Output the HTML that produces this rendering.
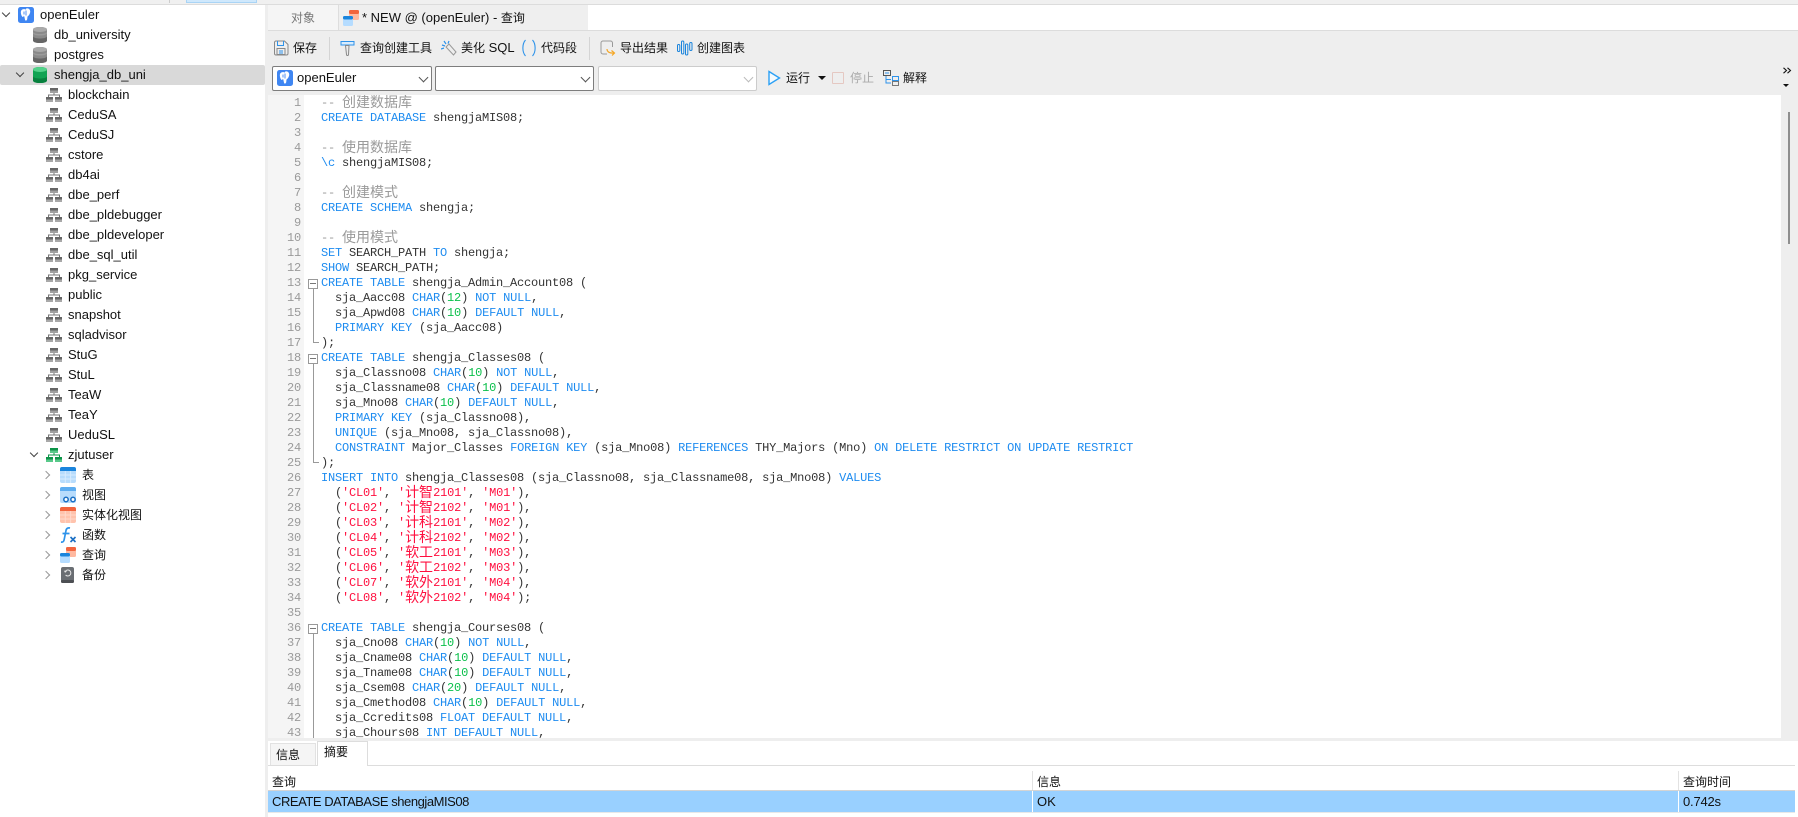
<!DOCTYPE html>
<html lang="zh"><head><meta charset="utf-8"><title>openEuler - 查询</title>
<style>
html,body{margin:0;padding:0;background:#fff}
body{width:1798px;height:817px;position:relative;overflow:hidden;font-family:"Liberation Sans","Noto Sans CJK SC",sans-serif;font-size:13px;color:#111}
.a{position:absolute}
.t{position:absolute;white-space:nowrap;line-height:20px;height:20px}
.c{font-size:12px}
.row svg,.a svg{display:block}
#side{left:0;top:5px;width:265px;height:812px;background:#fff}
#code{left:268px;top:95px;width:1513px;height:643px;overflow:hidden;background:#fff}
#gut{left:0;top:0;width:36px;height:643px;background:#f5f5f5}
.l{position:absolute;left:53px;margin-top:1px;height:15px;line-height:15px;white-space:pre;font-family:"Liberation Mono","Noto Sans CJK SC",monospace;font-size:12px;letter-spacing:-.2px;color:#333}
.n{position:absolute;left:0;margin-top:1px;width:33px;text-align:right;height:15px;line-height:15px;font-family:"Liberation Mono",monospace;font-size:12px;letter-spacing:-.2px;color:#9a9a9a}
b{font-weight:normal;color:#1e8cf0}
em{font-style:normal;color:#0cc04c}
s{text-decoration:none;color:#ff0f3f}
i{font-style:normal;color:#9a9a9a}
.z{font-size:14px;letter-spacing:0;line-height:0;font-family:"Noto Sans CJK SC",sans-serif;position:relative;top:1px}
.fb{position:absolute;left:40px;margin-top:1px;width:8px;height:8px;border:1px solid #999;background:#fff}
.fb:after{content:"";position:absolute;left:1px;top:3px;width:6px;height:1px;background:#777}
.fl{position:absolute;left:45px;margin-top:1px;width:1px;background:#999}
.ft{position:absolute;left:45px;margin-top:1px;width:6px;height:1px;background:#999}
.sel{position:absolute;top:66px;height:23px;background:#fff;border:1px solid #7d7d7d;border-radius:2px}
.chev{position:absolute;width:6px;height:6px;border-right:1px solid #555;border-bottom:1px solid #555;transform:rotate(45deg)}
.tc{position:absolute;width:5px;height:5px;border-right:1.500px solid #444;border-bottom:1.500px solid #444;transform:rotate(45deg)}
.tr{position:absolute;width:5px;height:5px;border-right:1.500px solid #999;border-bottom:1.500px solid #999;transform:rotate(-45deg)}
</style></head><body>
<svg width="0" height="0" style="position:absolute"><defs>
<symbol id="pg" viewBox="0 0 16 16"><rect width="16" height="16" rx="2.5" fill="#3f86f2"/><path d="M8 2.6C6.6 1.9 3.4 1.800 2.900 4.500c-.3 2 .6 4.300 1.500 5.300.6.600 1.200-.2 1.400-1 .8.500.9 3.400 1.400 4.400.5.700 1.700.4 2-.9.200-1 .1-2.500.5-3.100 1.200-.4 2.700-3.200 2.500-5-.2-2.600-2.800-3.300-4.200-2.600z" fill="#fff"/><path d="M8 3.500v5M6 4.500v3" stroke="#3f86f2" stroke-width=".9" fill="none"/></symbol>
<symbol id="dbg" viewBox="0 0 14 16"><path d="M0 2.500C0 1 3 0 7 0s7 1 7 2.500v11C14 15 11 16 7 16s-7-1-7-2.500z" fill="#8a8a8a"/><ellipse cx="7" cy="2.500" rx="7" ry="2.500" fill="#aaa"/><path d="M0 9.500C1 11 4 11.500 7 11.500s6-.5 7-2V13.500C14 15 11 16 7 16s-7-1-7-2.500z" fill="#666"/><path d="M0 5C1 6.500 4 7 7 7s6-.5 7-2v1.500c-1 1.500-4 2-7 2s-6-.5-7-2z" fill="#9b9b9b"/></symbol>
<symbol id="dbv" viewBox="0 0 14 16"><path d="M0 2.500C0 1 3 0 7 0s7 1 7 2.500v11C14 15 11 16 7 16s-7-1-7-2.500z" fill="#10a352"/><ellipse cx="7" cy="2.500" rx="7" ry="2.500" fill="#53d28a"/><path d="M0 9.500C1 11 4 11.500 7 11.500s6-.5 7-2V13.500C14 15 11 16 7 16s-7-1-7-2.500z" fill="#07813e"/></symbol>
<symbol id="sch" viewBox="0 0 16 14"><rect x="4" y="0" width="8" height="2.500" fill="#666"/><rect x="4" y="2.500" width="8" height="2.500" fill="#a0a0a0"/><path d="M8 5v2M2.500 9V7h11v2" stroke="#777" fill="none"/><rect x="0" y="9" width="7" height="2.500" fill="#666"/><rect x="0" y="11.500" width="7" height="2.500" fill="#a8a8a8"/><rect x="9" y="9" width="7" height="2.500" fill="#666"/><rect x="9" y="11.500" width="7" height="2.500" fill="#a8a8a8"/></symbol>
<symbol id="schg" viewBox="0 0 16 14"><rect x="4" y="0" width="8" height="2.500" fill="#0d9448"/><rect x="4" y="2.500" width="8" height="2.500" fill="#59c98a"/><path d="M8 5v2M2.500 9V7h11v2" stroke="#0d9448" fill="none"/><rect x="0" y="9" width="7" height="2.500" fill="#0d9448"/><rect x="0" y="11.500" width="7" height="2.500" fill="#59c98a"/><rect x="9" y="9" width="7" height="2.500" fill="#0d9448"/><rect x="9" y="11.500" width="7" height="2.500" fill="#59c98a"/></symbol>
<symbol id="qry" viewBox="0 0 16 16"><rect x="6" y="0" width="10" height="10" rx="1.500" fill="#ffb9a0"/><rect x="6" y="0" width="10" height="4" rx="1.500" fill="#f2643d"/><rect x="0" y="6" width="10" height="10" rx="1.500" fill="#b5dcff"/><rect x="0" y="6" width="10" height="3.500" rx="1.500" fill="#1a84dc"/></symbol>
</defs></svg>

<!-- top strip -->
<div class="a" style="left:0;top:0;width:1798px;height:4px;background:#f0f0f0"></div>
<div class="a" style="left:0;top:4px;width:1798px;height:1px;background:#dcdcdc"></div>
<div class="a" style="left:186px;top:0;width:69px;height:2px;background:#cfe8fc;border:1px solid #a9d4f5;border-top:0"></div>
<div class="a" style="left:169px;top:0;width:1px;height:3px;background:#ccc"></div>

<!-- sidebar -->
<div class="a" id="side"></div>
<div class="a" style="left:265px;top:5px;width:3px;height:812px;background:#eee"></div>
<div class="a" style="left:0;top:65px;width:265px;height:20px;background:#d9d9d9;border-radius:2px"></div>

<div class="tc" style="left:3px;top:10px"></div>
<svg class="a" style="left:18px;top:7px" width="16" height="16"><use href="#pg"/></svg>
<div class="t" style="left:40px;top:5px">openEuler</div>
<svg class="a" style="left:33px;top:27px" width="14" height="16"><use href="#dbg"/></svg>
<div class="t" style="left:54px;top:25px">db_university</div>
<svg class="a" style="left:33px;top:47px" width="14" height="16"><use href="#dbg"/></svg>
<div class="t" style="left:54px;top:45px">postgres</div>
<div class="tc" style="left:17px;top:70px"></div>
<svg class="a" style="left:33px;top:67px" width="14" height="16"><use href="#dbv"/></svg>
<div class="t" style="left:54px;top:65px">shengja_db_uni</div>

<svg class="a" style="left:46px;top:88px" width="16" height="14"><use href="#sch"/></svg><div class="t" style="left:68px;top:85px">blockchain</div>
<svg class="a" style="left:46px;top:108px" width="16" height="14"><use href="#sch"/></svg><div class="t" style="left:68px;top:105px">CeduSA</div>
<svg class="a" style="left:46px;top:128px" width="16" height="14"><use href="#sch"/></svg><div class="t" style="left:68px;top:125px">CeduSJ</div>
<svg class="a" style="left:46px;top:148px" width="16" height="14"><use href="#sch"/></svg><div class="t" style="left:68px;top:145px">cstore</div>
<svg class="a" style="left:46px;top:168px" width="16" height="14"><use href="#sch"/></svg><div class="t" style="left:68px;top:165px">db4ai</div>
<svg class="a" style="left:46px;top:188px" width="16" height="14"><use href="#sch"/></svg><div class="t" style="left:68px;top:185px">dbe_perf</div>
<svg class="a" style="left:46px;top:208px" width="16" height="14"><use href="#sch"/></svg><div class="t" style="left:68px;top:205px">dbe_pldebugger</div>
<svg class="a" style="left:46px;top:228px" width="16" height="14"><use href="#sch"/></svg><div class="t" style="left:68px;top:225px">dbe_pldeveloper</div>
<svg class="a" style="left:46px;top:248px" width="16" height="14"><use href="#sch"/></svg><div class="t" style="left:68px;top:245px">dbe_sql_util</div>
<svg class="a" style="left:46px;top:268px" width="16" height="14"><use href="#sch"/></svg><div class="t" style="left:68px;top:265px">pkg_service</div>
<svg class="a" style="left:46px;top:288px" width="16" height="14"><use href="#sch"/></svg><div class="t" style="left:68px;top:285px">public</div>
<svg class="a" style="left:46px;top:308px" width="16" height="14"><use href="#sch"/></svg><div class="t" style="left:68px;top:305px">snapshot</div>
<svg class="a" style="left:46px;top:328px" width="16" height="14"><use href="#sch"/></svg><div class="t" style="left:68px;top:325px">sqladvisor</div>
<svg class="a" style="left:46px;top:348px" width="16" height="14"><use href="#sch"/></svg><div class="t" style="left:68px;top:345px">StuG</div>
<svg class="a" style="left:46px;top:368px" width="16" height="14"><use href="#sch"/></svg><div class="t" style="left:68px;top:365px">StuL</div>
<svg class="a" style="left:46px;top:388px" width="16" height="14"><use href="#sch"/></svg><div class="t" style="left:68px;top:385px">TeaW</div>
<svg class="a" style="left:46px;top:408px" width="16" height="14"><use href="#sch"/></svg><div class="t" style="left:68px;top:405px">TeaY</div>
<svg class="a" style="left:46px;top:428px" width="16" height="14"><use href="#sch"/></svg><div class="t" style="left:68px;top:425px">UeduSL</div>
<div class="tc" style="left:31px;top:450px"></div>
<svg class="a" style="left:46px;top:448px" width="16" height="14"><use href="#schg"/></svg><div class="t" style="left:68px;top:445px">zjutuser</div>

<div class="tr" style="left:43px;top:472px"></div>
<svg class="a" style="left:60px;top:467px" width="16" height="16"><rect width="16" height="16" rx="2" fill="#b8dcfc"/><path d="M5.300 4v12M10.600 4v12M0 8h16M0 12h16" stroke="#d8ecfe"/><path d="M0 4V2a2 2 0 0 1 2-2h12a2 2 0 0 1 2 2v2z" fill="#1a84dc"/></svg>
<div class="t c" style="left:82px;top:465px">表</div>
<div class="tr" style="left:43px;top:492px"></div>
<svg class="a" style="left:60px;top:487px" width="16" height="16"><rect width="16" height="16" rx="2" fill="#b8dcfc"/><path d="M0 4V2a2 2 0 0 1 2-2h12a2 2 0 0 1 2 2v2z" fill="#5eadf0"/><circle cx="6" cy="12.500" r="2.200" fill="#fff" stroke="#1a6fc4" stroke-width="1.500"/><circle cx="13" cy="12.500" r="2.200" fill="#fff" stroke="#1a6fc4" stroke-width="1.500"/></svg>
<div class="t c" style="left:82px;top:485px">视图</div>
<div class="tr" style="left:43px;top:512px"></div>
<svg class="a" style="left:60px;top:507px" width="16" height="16"><rect width="16" height="16" rx="2" fill="#ffc3ad"/><path d="M5.300 4v12M10.600 4v12M0 8h16M0 12h16" stroke="#ffd9cb"/><path d="M0 4V2a2 2 0 0 1 2-2h12a2 2 0 0 1 2 2v2z" fill="#f2643d"/></svg>
<div class="t c" style="left:82px;top:505px">实体化视图</div>
<div class="tr" style="left:43px;top:532px"></div>
<svg class="a" style="left:60px;top:527px" width="17" height="16"><path d="M1 15c2.500.5 3-1 3.500-4L6 3.500C6.400 1.500 7.500.5 10 1M2.500 6.500h7" stroke="#2e93ea" stroke-width="1.700" fill="none"/><path d="M10.500 10l5 5m0-5l-5 5" stroke="#1a6fc4" stroke-width="1.600"/></svg>
<div class="t c" style="left:82px;top:525px">函数</div>
<div class="tr" style="left:43px;top:552px"></div>
<svg class="a" style="left:60px;top:547px" width="16" height="16"><use href="#qry"/></svg>
<div class="t c" style="left:82px;top:545px">查询</div>
<div class="tr" style="left:43px;top:572px"></div>
<svg class="a" style="left:61px;top:567px" width="13" height="16"><rect width="13" height="16" rx="2" fill="#6a6e73"/><rect y="13" width="13" height="3" rx="1.500" fill="#4c4f53"/><path d="M4 5a3 3 0 1 1 .6 3" stroke="#e8e8e8" fill="none"/><path d="M2.800 3.500L4 5.800 6 4.500z" fill="#e8e8e8"/></svg>
<div class="t c" style="left:82px;top:565px">备份</div>

<!-- tabs -->
<div class="a" style="left:268px;top:5px;width:1530px;height:25px;background:#fff"></div>
<div class="a" style="left:268px;top:5px;width:70px;height:25px;background:#f5f5f5;border-right:1px solid #ddd"></div>
<div class="t c" style="left:291px;top:8px;color:#777">对象</div>
<div class="a" style="left:339px;top:5px;width:249px;height:25px;background:#efefef"></div>
<svg class="a" style="left:343px;top:10px" width="16" height="16"><use href="#qry"/></svg>
<div class="t" style="left:362px;top:8px">* NEW @ (openEuler) - <span class="c">查询</span></div>
<div class="a" style="left:268px;top:30px;width:1530px;height:1px;background:#dcdcdc"></div>

<!-- toolbar -->
<div class="a" style="left:268px;top:31px;width:1530px;height:64px;background:#eee"></div>
<svg class="a" style="left:273px;top:40px" width="16" height="16" fill="none"><path d="M1.500 2.500a1.500 1.500 0 0 1 1.500-1.500h8.500l3.500 3.500v9a1.500 1.500 0 0 1-1.500 1.500H3a1.500 1.500 0 0 1-1.500-1.500z" stroke="#888"/><path d="M4.500 1v4.500h6V1" stroke="#2e93ea"/><rect x="4" y="8.500" width="8" height="6" stroke="#888"/><path d="M6 11h4M6 13h4" stroke="#2e93ea"/></svg>
<div class="t c" style="left:293px;top:38px">保存</div>
<div class="a" style="left:329px;top:37px;width:1px;height:23px;background:#d4d4d4"></div>
<svg class="a" style="left:340px;top:40px" width="15" height="16" fill="none"><path d="M1 1.500h13v3.500H1z" stroke="#2e93ea" fill="#d8ecfe"/><path d="M5.500 5.500h3.500L8.500 14.500a1 1 0 0 1-2 0z" stroke="#888" fill="#eee"/></svg>
<div class="t c" style="left:360px;top:38px">查询创建工具</div>
<svg class="a" style="left:441px;top:40px" width="16" height="16" fill="none"><path d="M5 7l3-3 7 8-2.500 3z" stroke="#999" fill="#eee"/><path d="M1 5l3 1M3 1l2 3M8 1L7 3.500M0 9l3-1" stroke="#2e93ea" stroke-width="1.200"/></svg>
<div class="t" style="left:461px;top:38px"><span class="c">美化</span> SQL</div>
<svg class="a" style="left:521px;top:39px" width="16" height="18" fill="none" stroke="#2e93ea" stroke-width="1.100"><path d="M4.500 1C1 5 1 13 4.500 17M11.500 1c3.500 4 3.500 12 0 16"/></svg>
<div class="t c" style="left:541px;top:38px">代码段</div>
<div class="a" style="left:589px;top:37px;width:1px;height:23px;background:#d4d4d4"></div>
<svg class="a" style="left:600px;top:40px" width="16" height="16" fill="none"><path d="M12.500 7V3a2 2 0 0 0-2-2H3a2 2 0 0 0-2 2v9a2 2 0 0 0 2 2h4" stroke="#999"/><path d="M7 9c0 3 3 4.500 7 4m-2.500-2.500L14.500 13l-2.500 2.500" stroke="#f5a623" stroke-width="1.200"/></svg>
<div class="t c" style="left:620px;top:38px">导出结果</div>
<svg class="a" style="left:677px;top:40px" width="16" height="16" fill="none" stroke="#1a84dc" stroke-width="1"><rect x=".5" y="4.500" width="2.300" height="7" rx="1.100"/><rect x="4.500" y="1" width="2.300" height="13" rx="1.100"/><rect x="8.500" y="4" width="2.300" height="11" rx="1.100"/><rect x="12.700" y="2.500" width="2.300" height="8" rx="1.100"/></svg>
<div class="t c" style="left:697px;top:38px">创建图表</div>

<!-- selects -->
<div class="sel" style="left:272px;width:158px"></div>
<svg class="a" style="left:277px;top:70px" width="16" height="16"><use href="#pg"/></svg>
<div class="t" style="left:297px;top:68px">openEuler</div>
<div class="chev" style="left:420px;top:74px"></div>
<div class="sel" style="left:435px;width:157px"></div>
<div class="chev" style="left:582px;top:74px"></div>
<div class="sel" style="left:598px;width:157px;border-color:#ccc"></div>
<div class="chev" style="left:745px;top:74px;border-color:#bbb"></div>

<svg class="a" style="left:767px;top:70px" width="14" height="16" fill="none"><path d="M2 1.500L12.500 8 2 14.500z" stroke="#2ba0f5" stroke-width="1.400" fill="#f4fafe"/></svg>
<div class="t c" style="left:786px;top:68px">运行</div>
<div class="a" style="left:818px;top:76px;width:0;height:0;border-left:4px solid transparent;border-right:4px solid transparent;border-top:4px solid #111"></div>
<div class="a" style="left:832px;top:72px;width:10px;height:10px;border:1px solid #e5c8c2;border-radius:1px"></div>
<div class="t c" style="left:850px;top:68px;color:#aaa">停止</div>
<svg class="a" style="left:883px;top:70px" width="16" height="16" fill="none"><rect x=".5" y=".5" width="7" height="5" stroke="#555"/><path d="M2 3h4" stroke="#2e93ea"/><path d="M3 6v3.500h5M3 9.500V13h5" stroke="#2e93ea"/><rect x="9.500" y="6.500" width="6" height="4" stroke="#2e93ea"/><rect x="9.500" y="11.500" width="6" height="4" stroke="#777"/></svg>
<div class="t c" style="left:903px;top:68px">解释</div>

<svg class="a" style="left:1783px;top:67px" width="9" height="7" fill="none" stroke="#111" stroke-width="1.100"><path d="M.5 .8l3 2.700-3 2.700M4.500 .8l3 2.700-3 2.700"/></svg>
<div class="a" style="left:1783px;top:84px;width:0;height:0;border-left:3px solid transparent;border-right:3px solid transparent;border-top:3px solid #111"></div>

<!-- editor -->
<div class="a" id="code">
<div class="a" id="gut"></div>
<div class="n" style="top:0">1</div><div class="l" style="top:0"><i>-- <span class="z">创建数据库</span></i></div>
<div class="n" style="top:15px">2</div><div class="l" style="top:15px"><b>CREATE DATABASE</b> shengjaMIS08;</div>
<div class="n" style="top:30px">3</div>
<div class="n" style="top:45px">4</div><div class="l" style="top:45px"><i>-- <span class="z">使用数据库</span></i></div>
<div class="n" style="top:60px">5</div><div class="l" style="top:60px"><b>\c</b> shengjaMIS08;</div>
<div class="n" style="top:75px">6</div>
<div class="n" style="top:90px">7</div><div class="l" style="top:90px"><i>-- <span class="z">创建模式</span></i></div>
<div class="n" style="top:105px">8</div><div class="l" style="top:105px"><b>CREATE SCHEMA</b> shengja;</div>
<div class="n" style="top:120px">9</div>
<div class="n" style="top:135px">10</div><div class="l" style="top:135px"><i>-- <span class="z">使用模式</span></i></div>
<div class="n" style="top:150px">11</div><div class="l" style="top:150px"><b>SET</b> SEARCH_PATH <b>TO</b> shengja;</div>
<div class="n" style="top:165px">12</div><div class="l" style="top:165px"><b>SHOW</b> SEARCH_PATH;</div>
<div class="n" style="top:180px">13</div><div class="l" style="top:180px"><b>CREATE TABLE</b> shengja_Admin_Account08 (</div>
<div class="n" style="top:195px">14</div><div class="l" style="top:195px">  sja_Aacc08 <b>CHAR</b>(<em>12</em>) <b>NOT NULL</b>,</div>
<div class="n" style="top:210px">15</div><div class="l" style="top:210px">  sja_Apwd08 <b>CHAR</b>(<em>10</em>) <b>DEFAULT NULL</b>,</div>
<div class="n" style="top:225px">16</div><div class="l" style="top:225px">  <b>PRIMARY KEY</b> (sja_Aacc08)</div>
<div class="n" style="top:240px">17</div><div class="l" style="top:240px">);</div>
<div class="n" style="top:255px">18</div><div class="l" style="top:255px"><b>CREATE TABLE</b> shengja_Classes08 (</div>
<div class="n" style="top:270px">19</div><div class="l" style="top:270px">  sja_Classno08 <b>CHAR</b>(<em>10</em>) <b>NOT NULL</b>,</div>
<div class="n" style="top:285px">20</div><div class="l" style="top:285px">  sja_Classname08 <b>CHAR</b>(<em>10</em>) <b>DEFAULT NULL</b>,</div>
<div class="n" style="top:300px">21</div><div class="l" style="top:300px">  sja_Mno08 <b>CHAR</b>(<em>10</em>) <b>DEFAULT NULL</b>,</div>
<div class="n" style="top:315px">22</div><div class="l" style="top:315px">  <b>PRIMARY KEY</b> (sja_Classno08),</div>
<div class="n" style="top:330px">23</div><div class="l" style="top:330px">  <b>UNIQUE</b> (sja_Mno08, sja_Classno08),</div>
<div class="n" style="top:345px">24</div><div class="l" style="top:345px">  <b>CONSTRAINT</b> Major_Classes <b>FOREIGN KEY</b> (sja_Mno08) <b>REFERENCES</b> THY_Majors (Mno) <b>ON DELETE RESTRICT ON UPDATE RESTRICT</b></div>
<div class="n" style="top:360px">25</div><div class="l" style="top:360px">);</div>
<div class="n" style="top:375px">26</div><div class="l" style="top:375px"><b>INSERT INTO</b> shengja_Classes08 (sja_Classno08, sja_Classname08, sja_Mno08) <b>VALUES</b></div>
<div class="n" style="top:390px">27</div><div class="l" style="top:390px">  (<s>'CL01'</s>, <s>'<span class="z">计智</span>2101'</s>, <s>'M01'</s>),</div>
<div class="n" style="top:405px">28</div><div class="l" style="top:405px">  (<s>'CL02'</s>, <s>'<span class="z">计智</span>2102'</s>, <s>'M01'</s>),</div>
<div class="n" style="top:420px">29</div><div class="l" style="top:420px">  (<s>'CL03'</s>, <s>'<span class="z">计科</span>2101'</s>, <s>'M02'</s>),</div>
<div class="n" style="top:435px">30</div><div class="l" style="top:435px">  (<s>'CL04'</s>, <s>'<span class="z">计科</span>2102'</s>, <s>'M02'</s>),</div>
<div class="n" style="top:450px">31</div><div class="l" style="top:450px">  (<s>'CL05'</s>, <s>'<span class="z">软工</span>2101'</s>, <s>'M03'</s>),</div>
<div class="n" style="top:465px">32</div><div class="l" style="top:465px">  (<s>'CL06'</s>, <s>'<span class="z">软工</span>2102'</s>, <s>'M03'</s>),</div>
<div class="n" style="top:480px">33</div><div class="l" style="top:480px">  (<s>'CL07'</s>, <s>'<span class="z">软外</span>2101'</s>, <s>'M04'</s>),</div>
<div class="n" style="top:495px">34</div><div class="l" style="top:495px">  (<s>'CL08'</s>, <s>'<span class="z">软外</span>2102'</s>, <s>'M04'</s>);</div>
<div class="n" style="top:510px">35</div>
<div class="n" style="top:525px">36</div><div class="l" style="top:525px"><b>CREATE TABLE</b> shengja_Courses08 (</div>
<div class="n" style="top:540px">37</div><div class="l" style="top:540px">  sja_Cno08 <b>CHAR</b>(<em>10</em>) <b>NOT NULL</b>,</div>
<div class="n" style="top:555px">38</div><div class="l" style="top:555px">  sja_Cname08 <b>CHAR</b>(<em>10</em>) <b>DEFAULT NULL</b>,</div>
<div class="n" style="top:570px">39</div><div class="l" style="top:570px">  sja_Tname08 <b>CHAR</b>(<em>10</em>) <b>DEFAULT NULL</b>,</div>
<div class="n" style="top:585px">40</div><div class="l" style="top:585px">  sja_Csem08 <b>CHAR</b>(<em>20</em>) <b>DEFAULT NULL</b>,</div>
<div class="n" style="top:600px">41</div><div class="l" style="top:600px">  sja_Cmethod08 <b>CHAR</b>(<em>10</em>) <b>DEFAULT NULL</b>,</div>
<div class="n" style="top:615px">42</div><div class="l" style="top:615px">  sja_Ccredits08 <b>FLOAT DEFAULT NULL</b>,</div>
<div class="n" style="top:630px">43</div><div class="l" style="top:630px">  sja_Chours08 <b>INT DEFAULT NULL</b>,</div>

<div class="fl" style="top:190px;height:56px"></div><div class="ft" style="top:246px"></div><div class="fb" style="top:183px"></div>
<div class="fl" style="top:265px;height:101px"></div><div class="ft" style="top:366px"></div><div class="fb" style="top:258px"></div>
<div class="fl" style="top:535px;height:108px"></div><div class="fb" style="top:528px"></div>
</div>

<!-- scrollbar -->
<div class="a" style="left:1781px;top:95px;width:17px;height:646px;background:#eee"></div>
<div class="a" style="left:1788px;top:112px;width:2px;height:132px;background:#8f8f8f"></div>

<!-- bottom -->
<div class="a" style="left:268px;top:738px;width:1530px;height:3px;background:#eee"></div>
<div class="a" style="left:268px;top:741px;width:1530px;height:76px;background:#fff"></div>
<div class="a" style="left:270px;top:743px;width:46px;height:22px;background:#f5f5f5;border:1px solid #e2e2e2;border-bottom:0;box-sizing:border-box"></div>
<div class="t c" style="left:276px;top:745px">信息</div>
<div class="a" style="left:317px;top:741px;width:51px;height:25px;background:#fff;border:1px solid #ddd;border-bottom:0;box-sizing:border-box;z-index:2"></div>
<div class="t c" style="left:324px;top:742px;z-index:3">摘要</div>
<div class="a" style="left:268px;top:765px;width:1527px;height:1px;background:#ddd"></div>
<div class="t c" style="left:272px;top:772px">查询</div>
<div class="t c" style="left:1037px;top:772px">信息</div>
<div class="t c" style="left:1683px;top:772px">查询时间</div>
<div class="a" style="left:1032px;top:771px;width:1px;height:20px;background:#e2e2e2"></div>
<div class="a" style="left:1678px;top:771px;width:1px;height:20px;background:#e2e2e2"></div>
<div class="a" style="left:268px;top:790px;width:1527px;height:1px;background:#d4d4d4"></div>
<div class="a" style="left:268px;top:791px;width:1527px;height:21px;background:#99d0ff"></div>
<div class="a" style="left:1032px;top:791px;width:1px;height:21px;background:#fff"></div>
<div class="a" style="left:1678px;top:791px;width:1px;height:21px;background:#fff"></div>
<div class="a" style="left:268px;top:812px;width:1527px;height:1px;background:#e8e8e8"></div>
<div class="t" style="left:272px;top:792px;letter-spacing:-.45px">CREATE DATABASE shengjaMIS08</div>
<div class="t" style="left:1037px;top:792px">OK</div>
<div class="t" style="left:1683px;top:792px;letter-spacing:-.2px">0.742s</div>
</body></html>
